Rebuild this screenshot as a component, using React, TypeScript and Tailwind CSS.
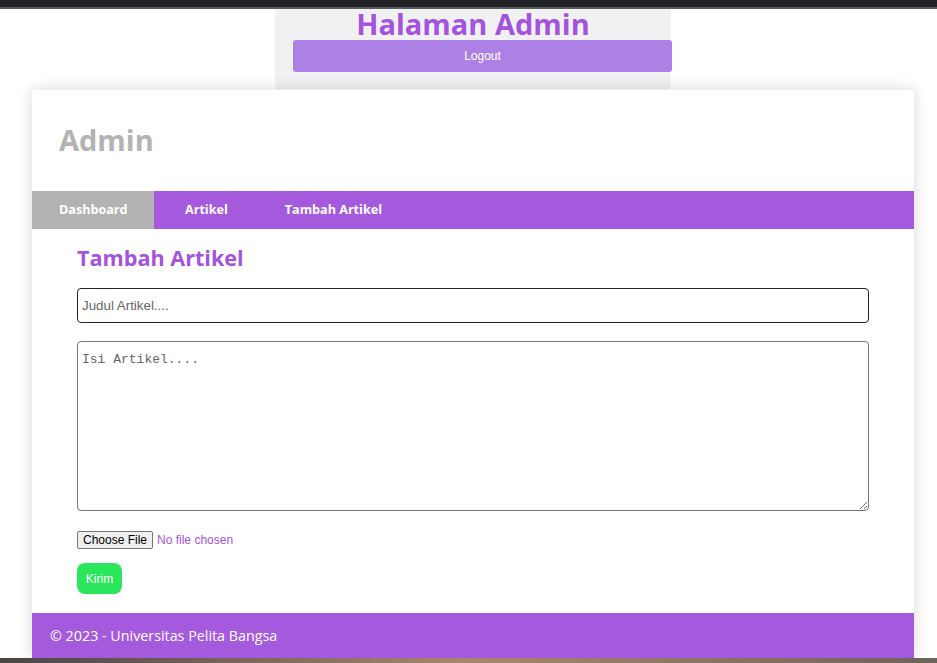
export default function App() {
  return (
    <div className="relative h-[663px] w-[937px] overflow-hidden bg-white font-['Open_Sans',sans-serif]">
      <div className="h-[7px] bg-[#202124]" />
      <div className="h-[2px] bg-[#5a5b5e]" />

      <div className="ml-[275px] flex h-[80px] w-[396px] flex-col items-center rounded-b-[4px] bg-[#f1f1f1]">
        <h1 className="mt-[-1px] text-[29px] font-bold leading-[32px] text-[#a453e0]">Halaman Admin</h1>
        <button className="ml-[18px] h-[32px] w-[379px] self-start rounded-[3px] bg-[#ad80e6] font-['Liberation_Sans',Arial,sans-serif] text-[12px] text-white">
          Logout
        </button>
      </div>

      <div className="ml-[32px] mt-[1px] w-[882px] bg-white shadow-[0_0_14px_rgba(0,0,0,0.16)]">
        <div className="flex h-[101px] items-center px-[27px] pb-[2px]">
          <h2 className="text-[29px] font-bold text-[#b3b3b3]">Admin</h2>
        </div>
        <nav className="flex h-[38px] items-center bg-[#a55ade] text-[12.6px] font-bold text-white">
          <a className="flex h-full w-[122px] items-center bg-[#b3b3b3] pl-[27px]">Dashboard</a>
          <a className="pl-[31px]">Artikel</a>
          <a className="pl-[57px]">Tambah Artikel</a>
        </nav>
        <div className="px-[45px] pb-[19px] pt-[14px]">
          <h3 className="text-[21.6px] font-bold leading-[30px] text-[#a453e0]">Tambah Artikel</h3>
          <input
            placeholder="Judul Artikel...."
            className="mt-[15px] block h-[35px] w-[792px] rounded-[4px] border border-[#222] px-[4px] font-['Liberation_Sans',Arial,sans-serif] text-[13.33px] text-[#555] placeholder:text-[#666]"
          />
          <textarea
            placeholder="Isi Artikel...."
            className="mt-[18px] block h-[170px] w-[792px] resize-y rounded-[4px] border border-[#767676] px-[4px] py-[8px] font-['Liberation_Mono',monospace] text-[13px] placeholder:text-[#666]"
          />
          <div className="mt-[20px] flex items-center font-['Liberation_Sans',Arial,sans-serif] text-[12px] leading-[16px]">
            <span className="rounded-[2px] border border-[#767676] bg-[#efefef] px-[5px] text-black">Choose File</span>
            <span className="ml-[4px] text-[#a453e0]">No file chosen</span>
          </div>
          <button className="mt-[14px] block h-[31px] w-[45px] rounded-[8px] bg-[#2ae65c] font-['Liberation_Sans',Arial,sans-serif] text-[12px] text-white">
            Kirim
          </button>
        </div>
        <footer className="flex h-[45px] items-center bg-[#a55ade] px-[18px] text-[14.3px] text-white">
          © 2023 - Universitas Pelita Bangsa
        </footer>
      </div>
      <div className="absolute bottom-0 left-0 h-[5px] w-full bg-gradient-to-r from-[#4a4644] via-[#a8876d] to-[#6e625a]" />
    </div>
  );
}
